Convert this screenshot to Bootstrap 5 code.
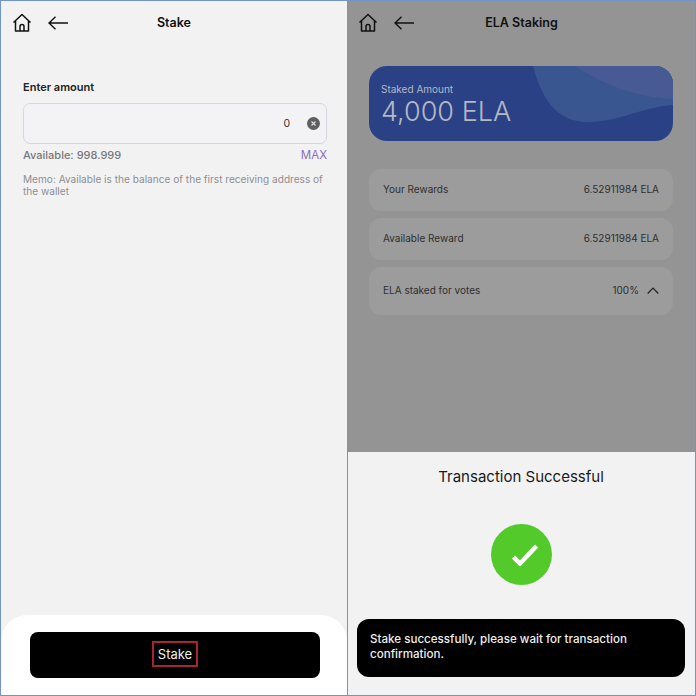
<!DOCTYPE html>
<html lang="en">
<head>
    <meta charset="UTF-8">
    <meta name="viewport" content="width=device-width, initial-scale=1.0">
    <title>ELA Staking</title>
    <link href="https://cdn.jsdelivr.net/npm/bootstrap@5.3.3/dist/css/bootstrap.min.css" rel="stylesheet">
    <script src="https://cdn.jsdelivr.net/npm/bootstrap@5.3.3/dist/js/bootstrap.bundle.min.js"></script>
    <style>
        html, body { margin: 0; background: #fff; }
        body { width: 696px; height: 696px; overflow: hidden; font-family: "Inter", "Liberation Sans", sans-serif; color: #1c1c1e; }
        .shot { width: 696px; height: 696px; }
        .pane { width: 349px; height: 696px; border: 1px solid #7393c9; background: #f2f2f2; flex: none; }
        .pane-left { width: 347px; border-right-width: 0; }
        .top-bar { height: 43px; padding: 0 0 0 11px; position: relative; }
        .top-title { position: absolute; left: 0; right: 0; text-align: center; font-size: 12.5px; font-weight: 600; color: #111; top: 13px; }
        .stake-body { padding: 36px 20px 0 22px; }
        .amount-label { font-size: 11px; font-weight: 600; color: #222; line-height: 14px; margin-bottom: 9px; }
        .amount-box { height: 41px; border: 1.5px solid #d6d5e0; border-radius: 7px; padding: 0 6px 0 0; background: #f3f3f5; font-size: 10.5px; color: #333; gap: 17px; }
        .clear-dot { width: 13px; height: 13px; }
        .avail-row { font-size: 11px; font-weight: 500; color: #77777c; margin-top: 4px; line-height: 14px; }
        .max-link { color: #8d6cc9; font-weight: 400; font-size: 11.5px; }
        .memo-text { font-size: 10.1px; line-height: 12px; color: #8f8f93; margin-top: 11px; }
        .stake-foot { background: #fff; height: 80px; border-radius: 26px 26px 0 0; padding: 17px 27px 0 29px; }
        .stake-btn { height: 46px; background: #000; border-radius: 8px; color: #eee; }
        .stake-mark { border: 2px solid #a6252f; font-size: 13px; padding: 0 3.5px; line-height: 22px; font-weight: 400; margin-top: -2px; }
        .dim-area { background: #949494; height: 451px; }
        .dim-area .top-bar { padding-left: 10px; }
        .dim-body { padding: 22px 22px 0 21px; }
        .staked-card { height: 75px; border-radius: 18px; background: #2a4186; color: #b4b8c4; position: relative; overflow: hidden; padding: 17px 12px; }
        .staked-wave { position: absolute; right: 0; top: 0; width: 140px; height: 75px; }
        .staked-small { font-size: 10px; line-height: 13px; position: relative; }
        .staked-big { font-size: 27px; line-height: 31px; font-weight: 300; position: relative; }
        .info-list { margin-top: 28px; gap: 7px; }
        .info-row { background: #9c9c9c; border-radius: 12px; padding: 0 14px 2px; font-size: 10px; color: #2f2f2f; height: 42px; }
        .info-tall { height: 48px; }
        .sheet { height: 243px; padding: 0 10px 0 9px; }
        .sheet-title { font-size: 15px; color: #1a1a1a; text-align: center; line-height: 18px; padding-top: 16px; }
        .ok-circle { width: 61px; height: 61px; margin: 38px auto 0; border-radius: 50%; background: #52cb2a; }
        .ok-tick { margin-left: 8px; }
        .toast-bar { height: 58px; margin-top: 34px; background: #000; border-radius: 12px; color: #eee; font-size: 11.6px; font-weight: 500; line-height: 15px; padding: 13px 13px; }
    </style>
</head>
<body>
<div class="shot d-flex">

    <!-- left phone -->
    <div class="pane pane-left d-flex flex-column">
        <div class="top-bar d-flex align-items-center gap-2">
            <div class="top-title">Stake</div>
            <svg width="20" height="20" viewBox="0 0 20 20" fill="none" stroke="#111" stroke-width="1.5" stroke-linejoin="round"><path d="M1.5 9.5 10 1.5l8.500 8M3.500 8v10h13V8M8 18v-4.500a2 2 0 0 1 4 0V18"/></svg>
            <svg class="ms-2" width="20" height="14" viewBox="0 0 20 14" fill="none" stroke="#111" stroke-width="1.400"><path d="M20 7H1M7.500 .8 1 7l6.500 6.200"/></svg>
        </div>
        <div class="stake-body flex-grow-1">
            <div class="amount-label">Enter amount</div>
            <div class="amount-box d-flex align-items-center justify-content-end">
                <span>0</span>
                <svg class="clear-dot" viewBox="0 0 13 13"><circle cx="6.500" cy="6.500" r="6.500" fill="#5f5f5f"/><path d="M4.500 4.500l4 4M8.500 4.500l-4 4" stroke="#ddd" stroke-width="1.200"/></svg>
            </div>
            <div class="avail-row d-flex justify-content-between">
                <span>Available: 998.999</span>
                <span class="max-link">MAX</span>
            </div>
            <div class="memo-text">Memo: Available is the balance of the first receiving address of the wallet</div>
        </div>
        <div class="stake-foot">
            <div class="stake-btn d-flex align-items-center justify-content-center">
                <span class="stake-mark">Stake</span>
            </div>
        </div>
    </div>

    <!-- right phone -->
    <div class="pane d-flex flex-column">
        <div class="dim-area">
            <div class="top-bar d-flex align-items-center gap-2">
                <div class="top-title">ELA Staking</div>
                <svg width="20" height="20" viewBox="0 0 20 20" fill="none" stroke="#111" stroke-width="1.5" stroke-linejoin="round"><path d="M1.5 9.5 10 1.5l8.500 8M3.500 8v10h13V8M8 18v-4.500a2 2 0 0 1 4 0V18"/></svg>
                <svg class="ms-2" width="20" height="14" viewBox="0 0 20 14" fill="none" stroke="#111" stroke-width="1.400"><path d="M20 7H1M7.500 .8 1 7l6.500 6.200"/></svg>
            </div>
            <div class="dim-body">
                <div class="staked-card">
                    <svg class="staked-wave" viewBox="0 0 140 75" preserveAspectRatio="none">
                        <path d="M0 0C8 30 22 56 55 56 85 56 110 41 140 39V0Z" fill="#3a5690"/>
                        <path d="M42 0C70 18 100 31 140 33V0Z" fill="#475a93"/>
                    </svg>
                    <div class="staked-small">Staked Amount</div>
                    <div class="staked-big">4,000 ELA</div>
                </div>
                <div class="d-flex flex-column info-list">
                    <div class="info-row d-flex align-items-center justify-content-between">
                        <span>Your Rewards</span><span>6.52911984 ELA</span>
                    </div>
                    <div class="info-row d-flex align-items-center justify-content-between">
                        <span>Available Reward</span><span>6.52911984 ELA</span>
                    </div>
                    <div class="info-row info-tall d-flex align-items-center justify-content-between">
                        <span>ELA staked for votes</span>
                        <span class="d-flex align-items-center gap-2">100%
                            <svg width="12" height="7" viewBox="0 0 12 7" fill="none" stroke="#222" stroke-width="1.200"><path d="M.7 6.500 6 1l5.300 5.500"/></svg>
                        </span>
                    </div>
                </div>
            </div>
        </div>
        <div class="sheet">
            <div class="sheet-title">Transaction Successful</div>
            <div class="ok-circle d-flex align-items-center justify-content-center">
                <svg class="ok-tick" width="26" height="22" viewBox="0 0 26 22" fill="none" stroke="#fff" stroke-width="4.500"><path d="M1.500 13 8 19.500 24.500 2"/></svg>
            </div>
            <div class="toast-bar">Stake successfully, please wait for transaction confirmation.</div>
        </div>
    </div>
</div>
</body>
</html>
